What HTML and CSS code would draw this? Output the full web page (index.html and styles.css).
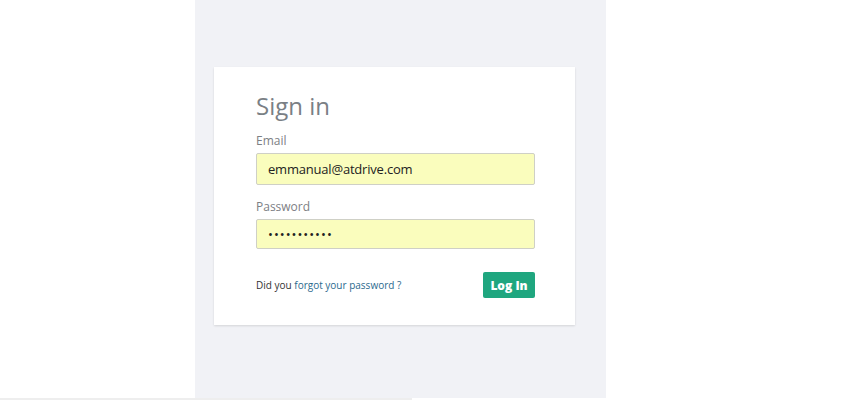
FILE: index.html
```html
<!DOCTYPE html>
<html lang="en">

<head>
    <meta charset="UTF-8">
    <meta name="viewport" content="width=device-width, initial-scale=1.0">
    <title>Sign in</title>
    <link rel="stylesheet" href="styles.css">
</head>

<body>

    <div class="page">
        <div class="panel">
            <div class="card">
                <h1>Sign in</h1>

                <label for="email">Email</label>
                <input type="text" id="email" value="emmanual@atdrive.com">

                <label for="password">Password</label>
                <input type="password" id="password" value="emmanual123">

                <div class="actions">
                    <span class="forgot">Did you <a href="#">forgot your password ?</a></span>
                    <button id="login">Log In</button>
                </div>
            </div>
        </div>
    </div>
    <div class="bottomline"></div>

</body>
</html>
```

FILE: styles.css
```css
body {
    margin: 0;
    background-color: #ffffff;
    font-family: "Open Sans", "Liberation Sans", sans-serif;
    height: 400px;
    overflow: hidden;
}

.page {
    display: flex;
    height: 398px;
}

.panel {
    margin-left: 195px;
    width: 411px;
    height: 398px;
    background-color: #f1f2f6;
    padding-top: 67px;
    box-sizing: border-box;
}

.card {
    display: flex;
    flex-direction: column;
    margin-left: 19px;
    width: 361px;
    height: 258px;
    box-sizing: border-box;
    padding: 22px 40px 0 42px;
    background-color: #ffffff;
    box-shadow: 0 1px 2px rgba(0, 0, 0, 0.12);
}

h1 {
    margin: 0;
    font-size: 24px;
    font-weight: 400;
    line-height: 33px;
    color: #7a7f85;
}

label {
    font-size: 12px;
    line-height: 16px;
    color: #7d8084;
    margin-top: 11px;
}

label[for="password"] {
    margin-top: 14px;
}

input {
    margin-top: 4px;
    height: 32px;
    box-sizing: border-box;
    border: 1px solid #cfd0c6;
    border-radius: 2px;
    background-color: #fafdbd;
    padding: 0 11px;
    font-family: "Open Sans", "Liberation Sans", sans-serif;
    font-size: 13px;
    letter-spacing: -0.2px;
    color: #222;
    outline: none;
}

#password {
    height: 30px;
    font-size: 13px;
    letter-spacing: 1px;
}

.actions {
    display: flex;
    justify-content: space-between;
    align-items: center;
    margin-top: 23px;
}

.forgot {
    font-size: 10px;
    color: #333;
}

.forgot a {
    color: #2c6a8e;
    text-decoration: none;
}

#login {
    width: 52px;
    height: 26px;
    border: none;
    border-radius: 2px;
    background-color: #1fa67f;
    color: #ffffff;
    font-family: "Open Sans", "Liberation Sans", sans-serif;
    font-size: 12px;
    font-weight: 800;
    padding: 0;
}

.bottomline {
    width: 412px;
    height: 2px;
    background-color: #eeeeee;
}
```
